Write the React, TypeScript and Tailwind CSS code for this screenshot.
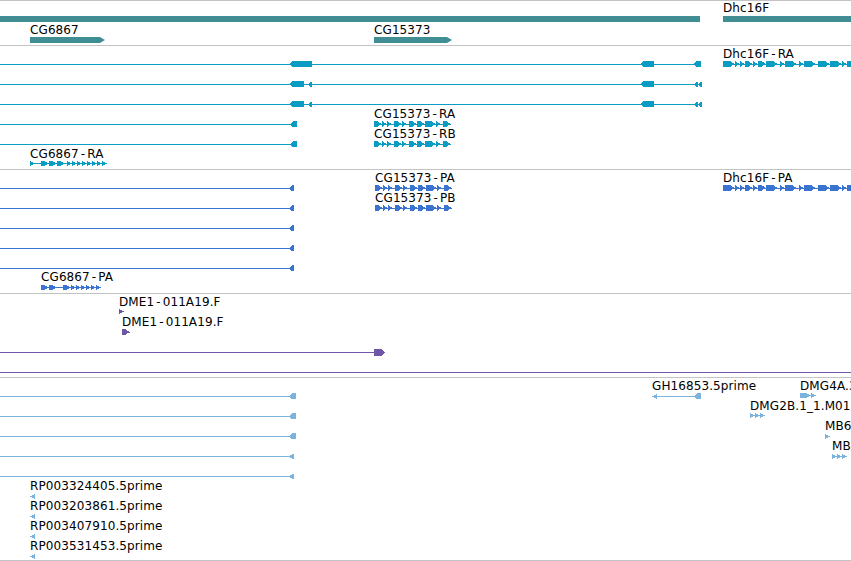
import type { ReactNode } from "react";
import clsx from "clsx";

const TEAL = "#408e93";
const CYAN = "#0a9cc3";
const BLUE = "#3a73d0";
const PURPLE = "#6e57a8";
const SKY = "#7cb3dd";

// row glyphs, drawn in page coordinates (the track svg shifts them)
const Line = ({ x1, x2, y, c }: { x1: number; x2: number; y: number; c: string }) => (
  <rect x={x1} y={y} width={x2 - x1} height={1} fill={c} />
);

const ExonL = ({ x1, x2, y, c }: { x1: number; x2: number; y: number; c: string }) => (
  <polygon
    points={`${x1},${y + 0.5} ${x1 + 4},${y - 3} ${x2},${y - 3} ${x2},${y + 3} ${x1 + 4},${y + 3}`}
    fill={c}
  />
);

const TriL = ({ x1, x2, y, c, h = 6 }: { x1: number; x2: number; y: number; c: string; h?: number }) => (
  <polygon points={`${x1},${y + 0.5} ${x2},${y + 0.5 - h / 2} ${x2},${y + 0.5 + h / 2}`} fill={c} />
);

// a small transcript glyph: ">" arrow, "#" block, "=" long block, "-" intron
const Chevrons = ({ pattern, c, h = 6, dy = 0 }: { pattern: string; c: string; h?: number; dy?: number }) => {
  const items: ReactNode[] = [];
  let cx = 0;
  pattern.split("").forEach((ch, i) => {
    if (ch === ">") {
      items.push(<polygon key={i} points={`${cx},${dy} ${cx + 5},${dy + h / 2} ${cx},${dy + h}`} />);
      cx += 5;
    } else if (ch === "#") {
      items.push(<rect key={i} x={cx} y={dy} width={3} height={h} />);
      cx += 3;
    } else if (ch === "=") {
      items.push(<rect key={i} x={cx} y={dy} width={7} height={h} />);
      cx += 7;
    } else {
      cx += 2;
    }
  });
  return (
    <svg width={cx} height={h + dy} shapeRendering="crispEdges">
      <g fill={c}>
        <rect x={0} y={dy + Math.floor(h / 2)} width={cx} height={1} />
        {items}
      </g>
    </svg>
  );
};

const Glyphs = ({ top, height, children }: { top: number; height: number; children: ReactNode }) => (
  <svg className="absolute left-0 top-0" width={851} height={height} shapeRendering="crispEdges">
    <g transform={`translate(0 ${-top})`}>{children}</g>
  </svg>
);

const Name = ({ text }: { text: string }) => (
  <span className="whitespace-nowrap text-[12px] leading-[14px] tracking-[0.1px] text-black">
    {text.split("-").map((part, i) => (
      <span key={i}>
        {i > 0 && <span className="mx-[2px]">-</span>}
        {part}
      </span>
    ))}
  </span>
);

// label with its glyph right underneath, placed at its genomic position
const Feature = ({ className, name, children }: { className: string; name: string; children?: ReactNode }) => (
  <div className={clsx("absolute flex flex-col items-start", className)}>
    <Name text={name} />
    {children}
  </div>
);

const DHC = "=>>>#>>#>=>->=>->=>-=>=>>=>=>>=>#>>=>=>";
const CG153 = "#>>>-#>>-#>#>##>>-#>";

export default function App() {
  return (
    <div className="flex h-[561px] w-[851px] flex-col overflow-hidden border-t border-[#c3c3c3] bg-white font-['DejaVu_Sans',sans-serif]">
      {/* genes */}
      <div className="relative h-[45px] border-b border-[#c3c3c3]">
        <Glyphs top={1} height={44}>
          <rect x={0} y={16} width={700} height={6} fill={TEAL} />
          <rect x={723} y={16} width={128} height={6} fill={TEAL} />
        </Glyphs>
        <Feature className="left-[723px] top-0" name="Dhc16F" />
        <Feature className="left-[30px] top-[22px]" name="CG6867">
          <svg width={75} height={6}>
            <polygon points="0,0 70,0 75,3 70,6 0,6" fill={TEAL} />
          </svg>
        </Feature>
        <Feature className="left-[374px] top-[22px]" name="CG15373">
          <svg width={78} height={6}>
            <polygon points="0,0 73,0 78,3 73,6 0,6" fill={TEAL} />
          </svg>
        </Feature>
      </div>

      {/* transcripts */}
      <div className="relative h-[124px] border-b border-[#c3c3c3]">
        <Glyphs top={46} height={123}>
          <Line x1={0} x2={701} y={64} c={CYAN} />
          <ExonL x1={289} x2={312} y={64} c={CYAN} />
          <ExonL x1={640} x2={654} y={64} c={CYAN} />
          <ExonL x1={693} x2={701} y={64} c={CYAN} />
          {[84, 104].map((y) => (
            <g key={y}>
              <Line x1={0} x2={702} y={y} c={CYAN} />
              <ExonL x1={289} x2={304} y={y} c={CYAN} />
              <TriL x1={307} x2={312} y={y} c={CYAN} />
              <ExonL x1={640} x2={654} y={y} c={CYAN} />
              <TriL x1={693} x2={698} y={y} c={CYAN} />
              <TriL x1={697} x2={702} y={y} c={CYAN} />
            </g>
          ))}
          {[124, 144].map((y) => (
            <g key={y}>
              <Line x1={0} x2={290} y={y} c={CYAN} />
              <TriL x1={289} x2={294} y={y} c={CYAN} />
              <rect x={293} y={y - 3} width={4} height={6} fill={CYAN} />
            </g>
          ))}
        </Glyphs>
        <Feature className="left-[723px] top-px" name="Dhc16F-RA">
          <Chevrons pattern={DHC} c={CYAN} />
        </Feature>
        <Feature className="left-[374px] top-[61px]" name="CG15373-RA">
          <Chevrons pattern={CG153} c={CYAN} />
        </Feature>
        <Feature className="left-[374px] top-[81px]" name="CG15373-RB">
          <Chevrons pattern={CG153} c={CYAN} />
        </Feature>
        <Feature className="left-[30px] top-[101px]" name="CG6867-RA">
          <Chevrons pattern=">---#>#>#>->>>>>>>>" c={CYAN} h={5} />
        </Feature>
      </div>

      {/* proteins */}
      <div className="relative h-[124px] border-b border-[#c3c3c3]">
        <Glyphs top={170} height={123}>
          {[188, 208, 228, 248, 268].map((y) => (
            <g key={y}>
              <Line x1={0} x2={290} y={y} c={BLUE} />
              <TriL x1={288} x2={293} y={y} c={BLUE} />
              <rect x={292} y={y - 3} width={2} height={6} fill={BLUE} />
            </g>
          ))}
        </Glyphs>
        <Feature className="left-[375px] top-px" name="CG15373-PA">
          <Chevrons pattern={CG153} c={BLUE} />
        </Feature>
        <Feature className="left-[375px] top-[21px]" name="CG15373-PB">
          <Chevrons pattern={CG153} c={BLUE} />
        </Feature>
        <Feature className="left-[723px] top-px" name="Dhc16F-PA">
          <Chevrons pattern={DHC} c={BLUE} />
        </Feature>
        <Feature className="left-[41px] top-[100px]" name="CG6867-PA">
          <Chevrons pattern="#>#>---#>>>>>>>" c={BLUE} h={5} dy={1} />
        </Feature>
      </div>

      {/* BAC ends */}
      <div className="relative h-[84px] border-b border-[#c3c3c3]">
        <Glyphs top={294} height={83}>
          <Line x1={0} x2={374} y={352} c={PURPLE} />
          <polygon points="374,349 381,349 385,352.5 381,356 374,356" fill={PURPLE} />
          <Line x1={0} x2={851} y={372} c={PURPLE} />
        </Glyphs>
        <Feature className="left-[119px] top-px" name="DME1-011A19.F">
          <Chevrons pattern=">" c={PURPLE} h={5} />
        </Feature>
        <Feature className="left-[122px] top-[21px]" name="DME1-011A19.F">
          <Chevrons pattern="#>" c={PURPLE} />
        </Feature>
      </div>

      {/* ESTs */}
      <div className="relative h-[183px] border-b border-[#c3c3c3]">
        <Glyphs top={378} height={182}>
          {[396, 416, 436].map((y) => (
            <g key={y}>
              <Line x1={0} x2={290} y={y} c={SKY} />
              <TriL x1={288} x2={293} y={y} c={SKY} />
              <rect x={292} y={y - 3} width={4} height={6} fill={SKY} />
            </g>
          ))}
          {[456, 476].map((y) => (
            <g key={y}>
              <Line x1={0} x2={290} y={y} c={SKY} />
              <TriL x1={288} x2={294} y={y} c={SKY} />
            </g>
          ))}
        </Glyphs>
        <Feature className="left-[652px] top-px" name="GH16853.5prime">
          <svg width={49} height={6} shapeRendering="crispEdges">
            <g fill={SKY}>
              <rect x={0} y={3} width={45} height={1} />
              <polygon points="0,3.5 5,1 5,6" />
              <polygon points="42,3.5 45,0 49,0 49,6 45,6" />
            </g>
          </svg>
        </Feature>
        <Feature className="left-[800px] top-px" name="DMG4A.3_1.M01.5prime">
          <Chevrons pattern="##>>" c={SKY} h={5} />
        </Feature>
        <Feature className="left-[750px] top-[21px]" name="DMG2B.1_1.M01.5prime">
          <Chevrons pattern=">>>" c={SKY} h={5} />
        </Feature>
        <Feature className="left-[825px] top-[41px]" name="MB6">
          <Chevrons pattern=">" c={SKY} h={5} dy={1} />
        </Feature>
        <Feature className="left-[832px] top-[61px]" name="MB6_2.5prime">
          <Chevrons pattern=">>>" c={SKY} h={5} dy={1} />
        </Feature>
        <div className="absolute left-[30px] top-[101px] flex flex-col">
          {["RP003324405.5prime", "RP003203861.5prime", "RP003407910.5prime", "RP003531453.5prime"].map(
            (name) => (
              <div key={name} className="flex h-[20px] flex-col items-start">
                <Name text={name} />
                <svg width={5} height={6} shapeRendering="crispEdges">
                  <polygon points="0,3.5 5,1 5,6" fill={SKY} />
                </svg>
              </div>
            ),
          )}
        </div>
      </div>
    </div>
  );
}
